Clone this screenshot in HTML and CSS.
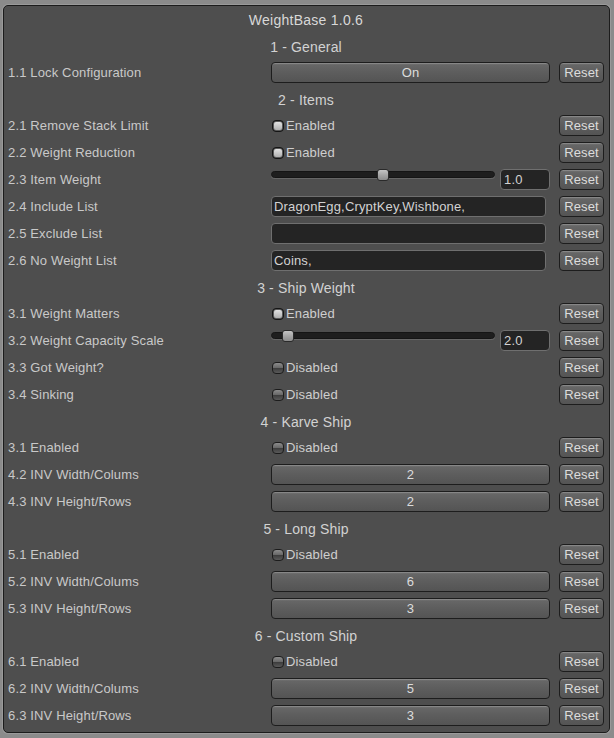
FILE: index.html
```html
<!DOCTYPE html>
<html>
<head>
<meta charset="utf-8">
<title>WeightBase 1.0.6</title>
<link rel="stylesheet" href="styles.css">
</head>
<body>
<div class="window">
  <div class="title">WeightBase 1.0.6</div>

  <div class="section">1 - General</div>
  <div class="row"><div class="label">1.1 Lock Configuration</div><div class="ctl"><div class="btn wide">On</div></div><div class="btn reset">Reset</div></div>

  <div class="section">2 - Items</div>
  <div class="row"><div class="label">2.1 Remove Stack Limit</div><div class="ctl"><span class="tog on"></span><span class="togtxt">Enabled</span></div><div class="btn reset">Reset</div></div>
  <div class="row"><div class="label">2.2 Weight Reduction</div><div class="ctl"><span class="tog on"></span><span class="togtxt">Enabled</span></div><div class="btn reset">Reset</div></div>
  <div class="row"><div class="label">2.3 Item Weight</div><div class="ctl top"><div class="slider"><div class="track"></div><div class="thumb" style="left:106px"></div></div><div class="field num">1.0</div></div><div class="btn reset">Reset</div></div>
  <div class="row"><div class="label">2.4 Include List</div><div class="ctl"><div class="field text">DragonEgg,CryptKey,Wishbone,</div></div><div class="btn reset">Reset</div></div>
  <div class="row"><div class="label">2.5 Exclude List</div><div class="ctl"><div class="field text"></div></div><div class="btn reset">Reset</div></div>
  <div class="row"><div class="label">2.6 No Weight List</div><div class="ctl"><div class="field text">Coins,</div></div><div class="btn reset">Reset</div></div>

  <div class="section">3 - Ship Weight</div>
  <div class="row"><div class="label">3.1 Weight Matters</div><div class="ctl"><span class="tog on"></span><span class="togtxt">Enabled</span></div><div class="btn reset">Reset</div></div>
  <div class="row"><div class="label">3.2 Weight Capacity Scale</div><div class="ctl top"><div class="slider"><div class="track"></div><div class="thumb" style="left:11px"></div></div><div class="field num">2.0</div></div><div class="btn reset">Reset</div></div>
  <div class="row"><div class="label">3.3 Got Weight?</div><div class="ctl"><span class="tog"></span><span class="togtxt">Disabled</span></div><div class="btn reset">Reset</div></div>
  <div class="row"><div class="label">3.4 Sinking</div><div class="ctl"><span class="tog"></span><span class="togtxt">Disabled</span></div><div class="btn reset">Reset</div></div>

  <div class="section">4 - Karve Ship</div>
  <div class="row"><div class="label">3.1 Enabled</div><div class="ctl"><span class="tog"></span><span class="togtxt">Disabled</span></div><div class="btn reset">Reset</div></div>
  <div class="row"><div class="label">4.2 INV Width/Colums</div><div class="ctl"><div class="btn wide">2</div></div><div class="btn reset">Reset</div></div>
  <div class="row"><div class="label">4.3 INV Height/Rows</div><div class="ctl"><div class="btn wide">2</div></div><div class="btn reset">Reset</div></div>

  <div class="section">5 - Long Ship</div>
  <div class="row"><div class="label">5.1 Enabled</div><div class="ctl"><span class="tog"></span><span class="togtxt">Disabled</span></div><div class="btn reset">Reset</div></div>
  <div class="row"><div class="label">5.2 INV Width/Colums</div><div class="ctl"><div class="btn wide">6</div></div><div class="btn reset">Reset</div></div>
  <div class="row"><div class="label">5.3 INV Height/Rows</div><div class="ctl"><div class="btn wide">3</div></div><div class="btn reset">Reset</div></div>

  <div class="section">6 - Custom Ship</div>
  <div class="row"><div class="label">6.1 Enabled</div><div class="ctl"><span class="tog"></span><span class="togtxt">Disabled</span></div><div class="btn reset">Reset</div></div>
  <div class="row"><div class="label">6.2 INV Width/Colums</div><div class="ctl"><div class="btn wide">5</div></div><div class="btn reset">Reset</div></div>
  <div class="row"><div class="label">6.3 INV Height/Rows</div><div class="ctl"><div class="btn wide">3</div></div><div class="btn reset">Reset</div></div>
</div>
</body>
</html>
```
FILE: styles.css
```css
* { box-sizing: border-box; }
html, body { margin: 0; padding: 0; }
body {
  background: #8b8b8b;
  font-family: "Liberation Sans", Arial, sans-serif;
  width: 614px;
  height: 738px;
  overflow: hidden;
}
.window {
  margin: 5px 0 0 3px;
  width: 607px;
  border: 1px solid #1c1c1c;
  border-radius: 5px;
  background: #4e4e4e;
  padding: 0 5px 3px 4px;
  box-shadow: 0 0 0 1px #9a9a9a;
}
.title {
  height: 27px;
  line-height: 29px;
  text-align: center;
  font-size: 14px;
  letter-spacing: 0.25px;
  color: #d8d8d8;
}
.section {
  height: 26px;
  line-height: 28px;
  text-align: center;
  font-size: 14px;
  letter-spacing: 0.15px;
  color: #d2d2d2;
}
.row {
  display: grid;
  grid-template-columns: 263px 288px 45px;
  height: 27px;
  align-items: center;
}
.label {
  font-size: 13px;
  letter-spacing: 0.15px;
  color: #c9c9c9;
  white-space: nowrap;
}
.ctl {
  display: flex;
  align-items: center;
  height: 21px;
}
.ctl.top { align-items: flex-start; }
.btn {
  height: 21px;
  border: 1px solid #1d1d1d;
  border-radius: 4px;
  background: linear-gradient(#7c7c7c 0, #666 2px, #5e5e5e 45%, #545454 100%);
  box-shadow: inset 0 1px 0 rgba(255,255,255,0.12);
  color: #dcdcdc;
  font-size: 13px;
  letter-spacing: 0.15px;
  text-align: center;
  line-height: 19px;
}
.btn.wide { width: 279px; }
.btn.reset { width: 45px; }
.field {
  height: 21px;
  background: #242424;
  border: 1px solid #6f6f6f;
  border-radius: 4px;
  color: #d2d2d2;
  font-size: 13px;
  letter-spacing: 0.15px;
  line-height: 19px;
  white-space: nowrap;
  overflow: hidden;
}
.field.text { width: 275px; padding-left: 2px; }
.field.num { width: 50px; margin-left: 5px; padding-left: 3px; }
.tog {
  width: 12px;
  height: 12px;
  margin-left: 1px;
  border: 1px solid #1c1c1c;
  border-radius: 4px;
  background: linear-gradient(#8c8c8c 0, #6a6a6a 45%, #3e3e3e 55%, #5a5a5a 100%);
  position: relative;
  flex: none;
}
.tog.on {
  background: #3a3a3a;
  border-color: #151515;
}
.tog.on::after {
  content: "";
  position: absolute;
  left: 1px;
  top: 1px;
  width: 8px;
  height: 8px;
  border-radius: 2px;
  background: linear-gradient(#e2e2e2, #b0b0b0);
  box-shadow: 0 0 0 0.5px #777;
}
.togtxt {
  margin-left: 2px;
  font-size: 13px;
  letter-spacing: 0.15px;
  color: #cfcfcf;
}
.slider {
  position: relative;
  width: 224px;
  height: 12px;
  flex: none;
}
.track {
  position: absolute;
  left: 0;
  right: 0;
  top: 2px;
  height: 7px;
  border-radius: 4px;
  background: #1e1e1e;
  border: 1px solid #151515;
  box-shadow: 0 1px 0 #666;
}
.thumb {
  position: absolute;
  top: 0;
  width: 12px;
  height: 12px;
  border: 1px solid #2a2a2a;
  border-radius: 3px;
  background: linear-gradient(#c4c4c4, #a6a6a6 50%, #8c8c8c);
}
```
